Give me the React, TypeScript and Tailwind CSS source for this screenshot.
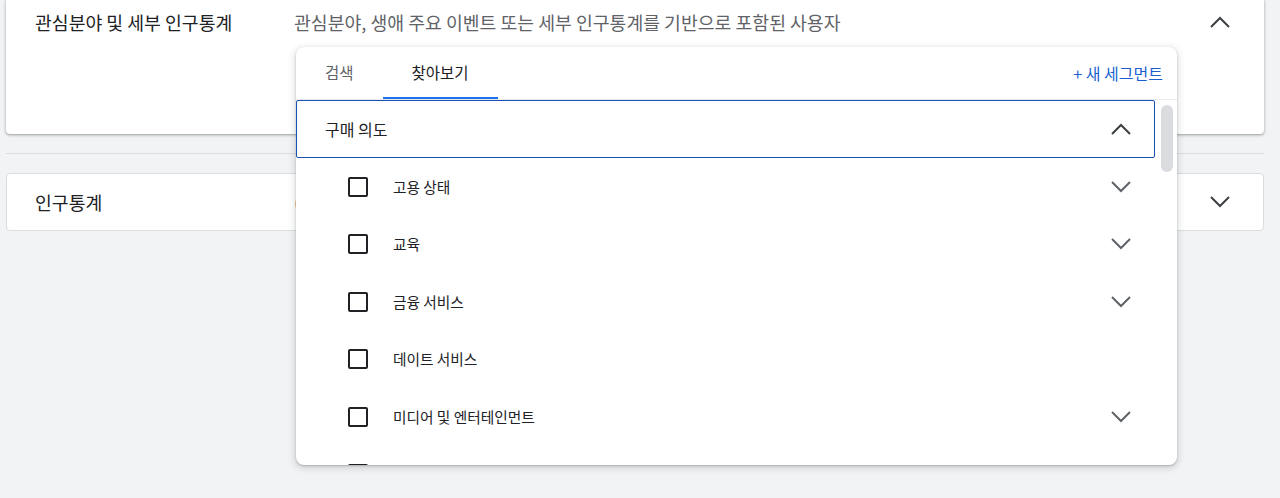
import React from "react";

const FONT = { fontFamily: '"Noto Sans CJK KR", "Noto Sans", sans-serif' };

function ChevronUp({ className = "" }: { className?: string }) {
  return (
    <svg width="20" height="12" viewBox="0 0 20 12" className={className} fill="none">
      <polyline points="1,11 10,2 19,11" stroke="currentColor" strokeWidth="2" />
    </svg>
  );
}

function ChevronDown({ className = "" }: { className?: string }) {
  return (
    <svg width="20" height="12" viewBox="0 0 20 12" className={className} fill="none">
      <polyline points="1,1 10,10 19,1" stroke="currentColor" strokeWidth="2" />
    </svg>
  );
}

const items: { label: string; expandable: boolean }[] = [
  { label: "고용 상태", expandable: true },
  { label: "교육", expandable: true },
  { label: "금융 서비스", expandable: true },
  { label: "데이트 서비스", expandable: false },
  { label: "미디어 및 엔터테인먼트", expandable: true },
  { label: "", expandable: true },
];

export default function App() {
  return (
    <div className="relative w-full h-[498px] bg-[#f1f3f4] overflow-hidden" style={FONT}>
      {/* Top card */}
      <div className="ml-[6px] mr-[16px] h-[134px] bg-white rounded-b-[4px] shadow-[0_1px_2px_rgba(60,64,67,0.3),0_1px_3px_1px_rgba(60,64,67,0.15)] flex items-start pt-[9px]">
        <div className="w-[288px] pl-[29px] text-[18.3px] leading-[26px] text-[#202124]">
          관심분야 및 세부 인구통계
        </div>
        <div className="flex-1 text-[18.3px] leading-[26px] text-[#5f6368]">
          관심분야, 생애 주요 이벤트 또는 세부 인구통계를 기반으로 포함된 사용자
        </div>
        <div className="pr-[34px] pt-[7px] text-[#3c4043]">
          <ChevronUp />
        </div>
      </div>

      {/* Divider */}
      <div className="ml-[6px] mr-[16px] mt-[19px] h-px bg-[#dadce0]" />

      {/* Second card */}
      <div className="ml-[6px] mr-[16px] mt-[19px] h-[58px] bg-white rounded-[4px] border border-[#dadce0] flex items-center">
        <div className="w-[287px] pl-[28px] text-[18.3px] leading-[26px] text-[#202124]">인구통계</div>
        <div className="flex-1 text-[18px] leading-[26px] text-[#5f6368]">(</div>
        <div className="pr-[33px] text-[#3c4043]">
          <ChevronDown />
        </div>
      </div>

      {/* Popover */}
      <div className="absolute left-[296px] top-[47px] w-[881px] h-[418px] bg-white rounded-[8px] shadow-[0_2px_6px_2px_rgba(60,64,67,0.15),0_1px_2px_rgba(60,64,67,0.3)] flex flex-col overflow-hidden">
        {/* Tabs */}
        <div className="h-[53px] flex items-stretch border-b border-[#e8eaed]">
          <div className="px-[29px] flex items-center text-[15.5px] text-[#5f6368]">검색</div>
          <div className="relative px-[29px] flex items-center text-[15.5px] text-[#202124]">
            찾아보기
            <div className="absolute left-0 right-0 bottom-0 h-[2px] bg-[#1a73e8]" />
          </div>
          <div className="flex-1" />
          <div className="pr-[14px] flex items-center text-[16px] text-[#1a5fd0]">+ 새 세그먼트</div>
        </div>

        {/* Scroll area */}
        <div className="flex-1 flex overflow-hidden">
          <div className="w-[859px] flex flex-col">
            <div className="h-[58px] shrink-0 border border-[#1a4fb4] rounded-[2px] flex items-center pl-[28px] pr-[23px]">
              <div className="flex-1 text-[16px] text-[#202124]">구매 의도</div>
              <ChevronUp className="text-[#3c4043]" />
            </div>
            {items.map((it, i) => (
              <div key={i} className="h-[57.5px] shrink-0 flex items-center pl-[52px] pr-[24px]">
                <div className="w-[20px] h-[20px] border-2 border-[#202124] rounded-[2px] shrink-0" />
                <div className="ml-[25px] flex-1 text-[14.7px] text-[#202124]">{it.label}</div>
                {it.expandable && <ChevronDown className="text-[#5f6368]" />}
              </div>
            ))}
          </div>
          <div className="w-[22px] pl-[6px] pt-[5px]">
            <div className="w-[12px] h-[67px] rounded-full bg-[#dadce0]" />
          </div>
        </div>
      </div>
    </div>
  );
}
